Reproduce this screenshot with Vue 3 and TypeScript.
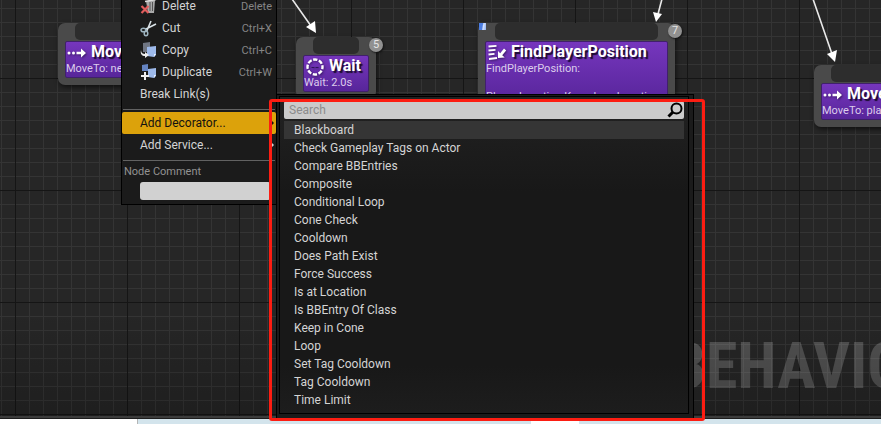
<script setup lang="ts">
import { ref } from 'vue'

interface GraphNode {
  id: string
  title: string
  lines: string[]
  icon: 'move' | 'wait' | 'task'
  order?: number
  blueprint?: boolean
}

const nodes: GraphNode[] = [
  { id: 'move-a', title: 'MoveTo', lines: ['MoveTo: nextLocation'], icon: 'move' },
  { id: 'wait', title: 'Wait', lines: ['Wait: 2.0s'], icon: 'wait', order: 5 },
  {
    id: 'find',
    title: 'FindPlayerPosition',
    lines: ['FindPlayerPosition:', '\u00a0', 'Player Location Key: playerLocation'],
    icon: 'task',
    order: 7,
    blueprint: true,
  },
  { id: 'move-b', title: 'MoveTo', lines: ['MoveTo: playerLocation'], icon: 'move' },
]

const editActions = [
  { name: 'Delete', keys: 'Delete', icon: 'delete' },
  { name: 'Cut', keys: 'Ctrl+X', icon: 'cut' },
  { name: 'Copy', keys: 'Ctrl+C', icon: 'copy' },
  { name: 'Duplicate', keys: 'Ctrl+W', icon: 'duplicate' },
]

const decorators: string[] = [
  'Blackboard',
  'Check Gameplay Tags on Actor',
  'Compare BBEntries',
  'Composite',
  'Conditional Loop',
  'Cone Check',
  'Cooldown',
  'Does Path Exist',
  'Force Success',
  'Is at Location',
  'Is BBEntry Of Class',
  'Keep in Cone',
  'Loop',
  'Set Tag Cooldown',
  'Tag Cooldown',
  'Time Limit',
]

const selected = ref('Blackboard')
const search = ref('')
const comment = ref('')
</script>

<template>
  <div class="editor">
    <main class="graph">
      <div class="watermark">BEHAVIOR TREE</div>

      <section v-for="node in nodes" :key="node.id" class="node" :class="node.id">
        <div class="pin"></div>
        <div class="body">
          <h2 class="title">
            <svg v-if="node.icon === 'move'" class="glyph" viewBox="0 0 22 20" aria-hidden="true">
              <g fill="#fff">
                <circle cx="3" cy="11" r="1.5" />
                <circle cx="7.5" cy="11" r="1.5" />
                <path d="M10.5 9.7h4.500V6.500l5 4.500-5 4.500v-3.200h-4.500z" />
              </g>
            </svg>
            <svg v-else-if="node.icon === 'wait'" class="glyph" viewBox="0 0 22 20" aria-hidden="true">
              <circle cx="11" cy="11" r="7.5" fill="none" stroke="#fff" stroke-width="2.4" stroke-dasharray="4.3 1.590" stroke-dashoffset="2.1" />
              <path d="M7.500 11.500h7" stroke="#2e1457" stroke-width="1" stroke-dasharray="3 1" />
            </svg>
            <svg v-else class="glyph" viewBox="0 0 22 20" aria-hidden="true">
              <path d="M2.500 4.500l8-.7M2.500 8.500l7-.7M2.500 12.500l6-.7M3 17l8-1" stroke="#fff" stroke-width="1.800" />
              <path d="M12 16V9l2.200 2.200L18 6.500l2.200 2-4 4.700 2.500 2.300z" fill="#fff" />
            </svg>
            {{ node.title }}
          </h2>
          <p v-for="line in node.lines" :key="line" class="line">{{ line }}</p>
        </div>
        <span v-if="node.order" class="order">{{ node.order }}</span>
        <span v-if="node.blueprint" class="blueprint"></span>
      </section>

      <svg class="wires" aria-hidden="true">
        <g stroke="#e8e8e8" stroke-width="1.600" fill="#fff">
          <path d="M292 -1L311 26M662 -1L658 14M813 -1L832 54" />
          <path stroke="none" d="M316 33L306 27L315 21zM656 22L653 12L662 14zM835 62L827 54L837 50z" />
        </g>
      </svg>
    </main>
    <footer class="below">
      <div class="page"></div>
      <div class="tab"></div>
    </footer>

    <div class="menu context">
      <button v-for="action in editActions" :key="action.name" class="row" type="button">
        <svg class="icon" viewBox="0 0 18 18" aria-hidden="true">
          <g v-if="action.icon === 'delete'">
            <path d="M6 4l9-1-1 13H8z" fill="#a9a9a9" />
            <path d="M5 4.500L16 2.500M8 2l4-1" stroke="#ddd" stroke-width="1.500" />
            <path d="M10 5v9M12.500 5v9" stroke="#555" />
            <path d="M1.500 9l7 7M8.500 9l-7 7" stroke="#e25d5d" stroke-width="2.200" />
          </g>
          <g v-else-if="action.icon === 'cut'" fill="none" stroke="#d9e2e6" stroke-width="1.500">
            <path d="M16 5L5 10.500M11 2L6.500 12.500" stroke-width="1.600" />
            <ellipse cx="3.500" cy="11" rx="2.500" ry="1.800" stroke="#9eb4bf" />
            <ellipse cx="6" cy="14.500" rx="1.800" ry="2.200" stroke="#9eb4bf" />
          </g>
          <g v-else-if="action.icon === 'copy'">
            <path d="M3 2l7-1v10H3z" fill="#6f7582" />
            <path d="M7 6l9-1v9l-2 2-7-1z" fill="#9db9ea" />
            <path d="M14 16v-3h2z" fill="#e5efff" />
            <path d="M1 9c0 3 2 4 4 4v-2l4 3-4 3v-2c-3 0-5-2-4-6z" fill="#eee" />
          </g>
          <g v-else>
            <path d="M2 2l6-1v7H2z" fill="#6483c1" />
            <path d="M8 6l8-1v8l-2 2-6-1z" fill="#9db9ea" />
            <path d="M14 15v-3h2z" fill="#e5efff" />
            <path d="M5 9v8M1 13h8" stroke="#eee" stroke-width="2" />
          </g>
        </svg>
        <span class="name">{{ action.name }}</span>
        <kbd class="keys">{{ action.keys }}</kbd>
      </button>
      <button class="row" type="button">Break Link(s)</button>
      <hr class="rule" />
      <button class="row active" type="button">
        <span class="name">Add Decorator...</span>
        <svg class="caret" viewBox="0 0 4 8" aria-hidden="true"><path d="M0 1l3 3-3 3z" /></svg>
      </button>
      <button class="row" type="button">
        <span class="name">Add Service...</span>
        <svg class="caret" viewBox="0 0 4 8" aria-hidden="true"><path d="M0 1l3 3-3 3z" /></svg>
      </button>
      <hr class="rule" />
      <label class="caption" for="node-comment">Node Comment</label>
      <input id="node-comment" v-model="comment" class="comment" type="text" />
    </div>

    <div class="menu submenu">
      <div class="panel">
        <div class="search">
          <input v-model="search" class="query" type="text" placeholder="Search" aria-label="Search" />
          <svg class="lens" viewBox="0 0 16 16" aria-hidden="true">
            <circle cx="9.500" cy="6.500" r="5" fill="none" stroke="#000" stroke-width="2" />
            <path d="M6 10l-4.500 4.500" stroke="#000" stroke-width="3" />
          </svg>
        </div>
        <button
          v-for="item in decorators"
          :key="item"
          class="item"
          :class="{ selected: item === selected }"
          type="button"
          @click="selected = item"
        >
          {{ item }}
        </button>
      </div>
    </div>

    <div class="outline"></div>
  </div>
</template>

<style>
body {
  margin: 0;
}
</style>

<style scoped>
.editor {
  position: relative;
  display: flex;
  flex-direction: column;
  height: 100vh;
  overflow: hidden;
  box-sizing: border-box;
  font-family: Roboto, sans-serif;
  font-size: 12px;
  color: #d4d4d4;
}

.graph {
  position: relative;
  flex: 1;
  overflow: hidden;
  border-bottom: 2px solid #3c3c3c;
  background-color: #262626;
  background-image:
    linear-gradient(#151515 1px, transparent 1px),
    linear-gradient(90deg, #151515 1px, transparent 1px),
    linear-gradient(#343434 1px, transparent 1px),
    linear-gradient(90deg, #343434 1px, transparent 1px);
  background-size: 112px 112px, 112px 112px, 14px 14px, 14px 14px;
  background-position: 0 78px, 15px 0, 0 8px, 1px 0;
}

.graph::after {
  content: '';
  position: absolute;
  inset: 0;
  background: linear-gradient(transparent 75%, rgba(0, 0, 0, 0.2));
}

.below {
  display: flex;
  gap: 393px;
  height: 5px;
  border-top: 1px solid #1d1d1d;
  background: #d3e4ec;
}

.page {
  width: 137px;
  border-right: 1px solid #b5b5b5;
  background: #fff;
}

.tab {
  width: 48px;
  background: #fff;
}

.watermark {
  position: absolute;
  top: 329px;
  left: 670px;
  font-family: 'Roboto Condensed', Roboto, sans-serif;
  font-size: 64px;
  line-height: 76px;
  font-weight: 700;
  white-space: nowrap;
  color: rgba(255, 255, 255, 0.2);
}

.node {
  position: absolute;
  box-sizing: border-box;
  padding: 0 7px 7px;
  border-radius: 7px;
  background: #4a4a4a;
  box-shadow: 1px 2px 5px rgba(0, 0, 0, 0.6);
}

.move-a {
  top: 23px;
  left: 58px;
  width: 130px;
}

.wait {
  top: 37px;
  left: 296px;
  width: 80px;
}

.find {
  top: 23px;
  left: 478px;
  width: 197px;
}

.move-b {
  top: 65px;
  left: 814px;
  width: 130px;
}

.pin {
  height: 17px;
  margin: 0 10px 1px;
  border-radius: 5px;
  background: #2d2d2d;
}

.body {
  box-sizing: border-box;
  min-height: 37px;
  overflow: hidden;
  border: 1px solid #40206b;
  border-radius: 2px;
  background: linear-gradient(#7636bd, #57259a);
}

.title {
  display: flex;
  align-items: center;
  gap: 3px;
  height: 20px;
  margin: 0;
  font-size: 16px;
  line-height: 20px;
  font-weight: 700;
  color: #fff;
  text-shadow: 2px 2px 1px #1b0c30;
}

.glyph {
  flex: none;
  width: 22px;
  height: 20px;
  filter: drop-shadow(1px 1px 1px rgba(27, 12, 48, 0.6));
}

.line {
  margin: 0;
  font-size: 11px;
  line-height: 14px;
  white-space: nowrap;
  color: #dccdec;
}

.order {
  position: absolute;
  top: 1px;
  right: -7px;
  width: 14px;
  height: 14px;
  border-radius: 50%;
  background: #909090;
  box-shadow: 1px 1px 2px #111;
  font-size: 11px;
  line-height: 14px;
  text-align: center;
  color: #e4e4e4;
}

.blueprint {
  position: absolute;
  top: 0;
  left: 1px;
  width: 7px;
  height: 7px;
  background: linear-gradient(100deg, #4c7de0 45%, #d6e4ff 60%, #8fb0f0);
}

.wires {
  position: absolute;
  inset: 0;
  width: 100%;
  height: 100%;
}

.menu {
  position: absolute;
  box-sizing: border-box;
  border: 1px solid #000;
  background: #1b1b1b;
}

.context {
  top: -6px;
  left: 121px;
  display: flex;
  flex-direction: column;
  width: 156px;
  padding-bottom: 4px;
}

.row {
  display: flex;
  align-items: center;
  box-sizing: border-box;
  height: 22px;
  margin: 0;
  padding: 0 4px 0 18px;
  border: 0;
  background: none;
  font: inherit;
  color: inherit;
  text-align: left;
}

.row.active {
  border-radius: 2px;
  background: #dca20b;
  color: #111;
}

.icon {
  width: 18px;
  height: 18px;
  margin-right: 4px;
}

.name {
  flex: 1;
}

.keys {
  font-family: inherit;
  font-size: 11px;
  color: #858585;
}

.caret {
  width: 4px;
  height: 8px;
  margin-right: -3px;
  fill: currentColor;
}

.rule {
  width: calc(100% - 2px);
  height: 1px;
  margin: 4px 1px 2px;
  border: 0;
  background: #626262;
}

.caption {
  padding-left: 2px;
  font-size: 11px;
  line-height: 18px;
  color: #929292;
}

.comment {
  box-sizing: border-box;
  height: 18px;
  margin: 1px 5px 0 18px;
  padding: 0 4px;
  border: 0;
  border-radius: 3px;
  background: #d1d1d1;
  font: inherit;
}

.submenu {
  top: 94px;
  left: 276px;
  width: 418px;
  padding: 1px 4px 4px 2px;
}

.panel {
  display: flex;
  flex-direction: column;
  padding: 4px;
  border: 1px solid #000;
  background: linear-gradient(#222, #181818 30%, #181818 85%, #1d1d1d);
}

.search {
  display: flex;
  align-items: center;
  height: 18px;
  margin-bottom: 2px;
  padding-right: 1px;
  border-radius: 2px;
  background: #cbcbcb;
}

.query {
  flex: 1;
  min-width: 0;
  padding: 0 5px;
  border: 0;
  outline: 0;
  background: none;
  font: inherit;
  color: #222;
}

.query::placeholder {
  color: #8b8b8b;
}

.lens {
  width: 16px;
  height: 16px;
}

.item {
  height: 18px;
  padding: 0 10px;
  border: 0;
  background: none;
  font: inherit;
  line-height: 18px;
  color: inherit;
  text-align: left;
}

.item.selected {
  background: #353535;
}

.outline {
  position: absolute;
  top: 99px;
  left: 269px;
  box-sizing: border-box;
  width: 436px;
  height: 322px;
  border: 3px solid #fc1d12;
  border-radius: 3px;
  pointer-events: none;
}
</style>
